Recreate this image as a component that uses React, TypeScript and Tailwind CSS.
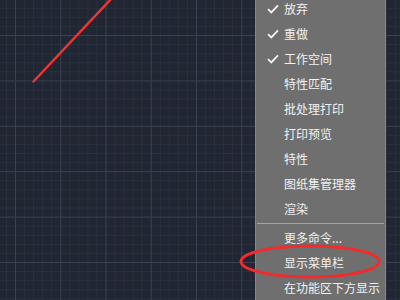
import React from 'react';

const items: { label: string; checked?: boolean; sep?: boolean }[] = [
  { label: '放弃', checked: true },
  { label: '重做', checked: true },
  { label: '工作空间', checked: true },
  { label: '特性匹配' },
  { label: '批处理打印' },
  { label: '打印预览' },
  { label: '特性' },
  { label: '图纸集管理器' },
  { label: '渲染', sep: true },
  { label: '更多命令...' },
  { label: '显示菜单栏' },
  { label: '在功能区下方显示' },
];

// 画布网格：主线间距约 45px，每格 5 条细线
const Grid = () => {
  const minor: React.ReactNode[] = [];
  const major: React.ReactNode[] = [];
  for (let i = -10; i < 50; i++) {
    const x = 15.5 + i * 9.05;
    const y = 35.5 + i * 9.08;
    const isMajor = i % 5 === 0;
    const target = isMajor ? major : minor;
    target.push(<line key={`v${i}`} x1={x} y1={0} x2={x} y2={300} />);
    target.push(<line key={`h${i}`} x1={0} y1={y} x2={400} y2={y} />);
  }
  return (
    <svg className="absolute inset-0" width="400" height="300">
      <g stroke="#2a303e" strokeWidth="1">{minor}</g>
      <g stroke="#3a4153" strokeWidth="1">{major}</g>
      <line x1="33.5" y1="81.5" x2="112" y2="-2" stroke="#f03434" strokeWidth="2.5" strokeLinecap="round" />
    </svg>
  );
};

const Check = () => (
  <svg width="12" height="10" viewBox="0 0 12 10">
    <path d="M1 5.2 L4.3 8.4 L11 1.4" fill="none" stroke="#f4f4f4" strokeWidth="1.8" />
  </svg>
);

export default function App() {
  return (
    <div
      className="relative w-[400px] h-[300px] overflow-hidden bg-[#212633]"
      style={{ fontFamily: '"Noto Sans CJK SC", "Noto Sans", sans-serif' }}
    >
      <Grid />
      <div className="absolute left-[255px] top-[-4px] w-[131px] bg-[#6f6f6f] border-l border-r border-[#868686]">
        {items.map(item => (
          <React.Fragment key={item.label}>
            <div className="flex items-center h-[25px] text-[12px] text-[#f2f2f2]">
              <div className="w-[28px] flex justify-end pr-[5px]">{item.checked && <Check />}</div>
              <span className="leading-none">{item.label}</span>
            </div>
            {item.sep && (
              <div className="h-[4px] flex items-center px-[1px]">
                <div className="h-px w-full bg-[#a3a3a3]" />
              </div>
            )}
          </React.Fragment>
        ))}
      </div>
      <svg className="absolute inset-0 pointer-events-none" width="400" height="300">
        <ellipse cx="310" cy="261.5" rx="69" ry="15.5" fill="none" stroke="#f02c2c" strokeWidth="3" />
      </svg>
    </div>
  );
}
